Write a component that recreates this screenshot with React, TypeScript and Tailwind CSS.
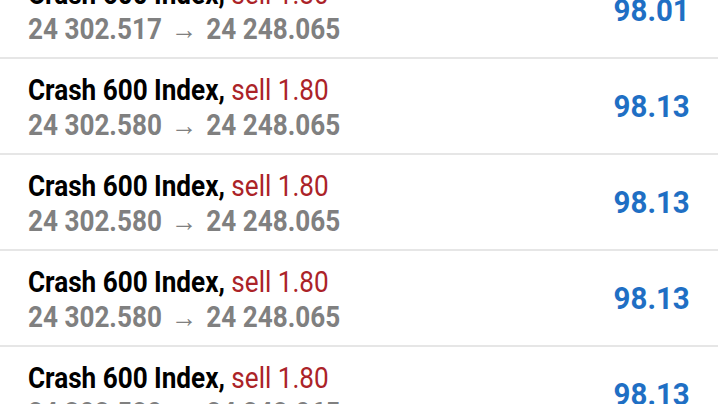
const rows = [
  { from: "24 302.517", to: "24 248.065", profit: "98.01" },
  { from: "24 302.580", to: "24 248.065", profit: "98.13" },
  { from: "24 302.580", to: "24 248.065", profit: "98.13" },
  { from: "24 302.580", to: "24 248.065", profit: "98.13" },
  { from: "24 302.580", to: "24 248.065", profit: "98.13" },
];

function TradeRow({ from, to, profit }: { from: string; to: string; profit: string }) {
  return (
    <div className="flex h-[96px] items-center justify-between border-b-2 border-[#e6e6e6] pl-[28px] pr-[28px]">
      <div className="origin-left scale-x-[0.9] whitespace-nowrap pt-[3px] text-[29px] leading-[35px]">
        <div>
          <span className="font-bold text-black">Crash 600 Index,</span>{" "}
          <span className="text-[#ab2328]">sell 1.80</span>
        </div>
        <div className="font-bold text-[#808080]">
          {from} <span className="mx-[3px] font-normal">→</span> {to}
        </div>
      </div>
      <div className="origin-right scale-x-[0.92] text-[32px] font-bold text-[#1f6fc4]">{profit}</div>
    </div>
  );
}

export default function App() {
  return (
    <div className="h-[404px] w-[718px] overflow-hidden bg-white font-['Roboto',sans-serif]">
      <div className="-mt-[37px]">
        {rows.map((r, i) => (
          <TradeRow key={i} {...r} />
        ))}
      </div>
    </div>
  );
}
